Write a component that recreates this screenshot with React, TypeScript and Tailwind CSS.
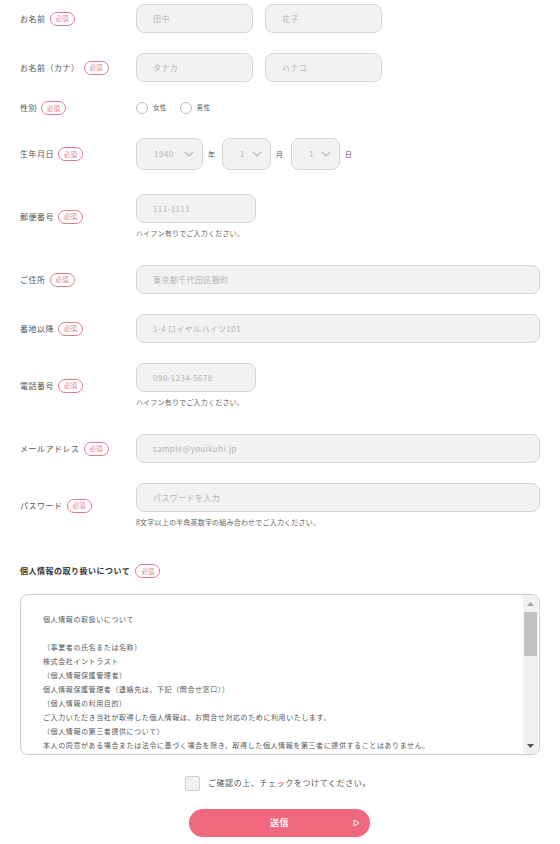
import React from "react";

const FONT = { fontFamily: '"Noto Sans CJK JP", "Noto Sans", sans-serif' };

function Badge() {
  return (
    <span className="inline-flex h-[14px] items-center rounded-full border-[1.5px] border-[#e27a8e] px-[5px] text-[6.5px] leading-none text-[#e27a8e]">
      必須
    </span>
  );
}

function Label({ text }: { text: string }) {
  return (
    <div className="flex w-[116px] shrink-0 items-center gap-[4px]">
      <span className="text-[8px] leading-[12px] tracking-[0.5px] text-[#555]">{text}</span>
      <Badge />
    </div>
  );
}

function Input({ ph, w }: { ph: string; w?: string }) {
  return (
    <div
      className={`flex h-[29px] items-center rounded-[8px] border border-[#d6d6d6] bg-[#f2f2f2] pl-[16px] text-[8px] tracking-[0.4px] text-[#b3b3b3] ${w ?? "flex-1"}`}
    >
      {ph}
    </div>
  );
}

function Hint({ text }: { text: string }) {
  return <div className="mt-[4px] text-[7px] leading-[12px] tracking-[0.2px] text-[#666]">{text}</div>;
}

function Select({ value, w, pl }: { value: string; w: string; pl: string }) {
  return (
    <div className={`flex h-[32px] items-center justify-between rounded-[8px] border border-[#d6d6d6] bg-[#f2f2f2] ${w} ${pl} pr-[8px]`}>
      <span className="text-[8px] tracking-[0.5px] text-[#b3b3b3]">{value}</span>
      <svg width="10" height="6" viewBox="0 0 10 6" fill="none">
        <path d="M1 1l4 4 4-4" stroke="#b8b8b8" strokeWidth="1.1" />
      </svg>
    </div>
  );
}

function Radio({ label }: { label: string }) {
  return (
    <div className="flex items-center gap-[5px]">
      <span className="h-[12px] w-[12px] rounded-full border border-[#bdbdbd] bg-white" />
      <span className="text-[6.5px] tracking-[0.3px] text-[#555]">{label}</span>
    </div>
  );
}

const policy = [
  "個人情報の取扱いについて",
  "",
  "（事業者の氏名または名称）",
  "株式会社イントラスト",
  "（個人情報保護管理者）",
  "個人情報保護管理者（連絡先は、下記（問合せ窓口））",
  "（個人情報の利用目的）",
  "ご入力いただき当社が取得した個人情報は、お問合せ対応のために利用いたします。",
  "（個人情報の第三者提供について）",
  "本人の同意がある場合または法令に基づく場合を除き、取得した個人情報を第三者に提供することはありません。",
];

export default function App() {
  return (
    <div style={FONT} className="w-[560px] bg-white px-[20px] pt-[4px] pb-[7px]">
      {/* お名前 */}
      <div className="flex items-center">
        <Label text="お名前" />
        <div className="flex gap-[12px]">
          <Input ph="田中" w="w-[117px]" />
          <Input ph="花子" w="w-[117px]" />
        </div>
      </div>
      {/* カナ */}
      <div className="mt-[20px] flex items-center">
        <Label text="お名前（カナ）" />
        <div className="flex gap-[12px]">
          <Input ph="タナカ" w="w-[117px]" />
          <Input ph="ハナコ" w="w-[117px]" />
        </div>
      </div>
      {/* 性別 */}
      <div className="mt-[20px] flex h-[12px] items-center">
        <Label text="性別" />
        <div className="flex items-center gap-[13px]">
          <Radio label="女性" />
          <Radio label="男性" />
        </div>
      </div>
      {/* 生年月日 */}
      <div className="mt-[24px] flex items-center">
        <Label text="生年月日" />
        <div className="flex items-center">
          <Select value="1940" w="w-[67px]" pl="pl-[17px]" />
          <span className="ml-[5px] mr-[7px] text-[7px] text-[#555]">年</span>
          <Select value="1" w="w-[49px]" pl="pl-[17px]" />
          <span className="ml-[5px] mr-[8px] text-[7px] text-[#555]">月</span>
          <Select value="1" w="w-[49px]" pl="pl-[17px]" />
          <span className="ml-[5px] text-[7px] text-[#555]">日</span>
        </div>
      </div>
      {/* 郵便番号 */}
      <div className="mt-[24px] flex items-center">
        <Label text="郵便番号" />
        <div>
          <Input ph="111-1111" w="w-[120px]" />
          <Hint text="ハイフン有りでご入力ください。" />
        </div>
      </div>
      {/* ご住所 */}
      <div className="mt-[26px] flex items-center">
        <Label text="ご住所" />
        <Input ph="東京都千代田区麹町" />
      </div>
      {/* 番地以降 */}
      <div className="mt-[20px] flex items-center">
        <Label text="番地以降" />
        <Input ph="1-4 ロイヤルハイツ101" />
      </div>
      {/* 電話番号 */}
      <div className="mt-[20px] flex items-center">
        <Label text="電話番号" />
        <div>
          <Input ph="090-1234-5678" w="w-[120px]" />
          <Hint text="ハイフン有りでご入力ください。" />
        </div>
      </div>
      {/* メール */}
      <div className="mt-[26px] flex items-center">
        <Label text="メールアドレス" />
        <Input ph="sample@youikuhi.jp" />
      </div>
      {/* パスワード */}
      <div className="mt-[20px] flex items-center">
        <Label text="パスワード" />
        <div className="flex-1">
          <Input ph="パスワードを入力" w="w-full" />
          <Hint text="8文字以上の半角英数字の組み合わせでご入力ください。" />
        </div>
      </div>
      {/* 個人情報 */}
      <div className="mt-[36px] flex h-[14px] items-center gap-[5px]">
        <span className="text-[8px] font-bold tracking-[0.5px] text-[#333]">個人情報の取り扱いについて</span>
        <Badge />
      </div>
      <div className="mt-[16px] flex h-[161px] overflow-hidden rounded-[8px] border border-[#cfcfcf] bg-white">
        <div className="flex-1 pl-[22px] pt-[17px]">
          {policy.map((l, i) => (
            <div key={i} className="h-[14px] whitespace-nowrap text-[7px] leading-[14px] tracking-[0.6px] text-[#555]">
              {l}
            </div>
          ))}
        </div>
        <div className="mr-[1px] flex w-[15px] flex-col bg-[#f1f1f1]">
          <div className="flex h-[17px] items-center justify-center">
            <svg width="7" height="4" viewBox="0 0 7 4">
              <path d="M0 4L3.5 0L7 4z" fill="#a3a3a3" />
            </svg>
          </div>
          <div className="mx-[1px] h-[44px] bg-[#c1c1c1]" />
          <div className="flex-1" />
          <div className="flex h-[17px] items-center justify-center">
            <svg width="7" height="4" viewBox="0 0 7 4">
              <path d="M0 0L3.5 4L7 0z" fill="#505050" />
            </svg>
          </div>
        </div>
      </div>
      {/* checkbox */}
      <div className="mt-[20px] flex h-[16px] items-center justify-center gap-[8px] pr-[4px]">
        <span className="h-[15px] w-[15px] rounded-[2px] border border-[#cfcfcf] bg-[#f2f2f2]" />
        <span className="text-[8px] tracking-[0.6px] text-[#555]">ご確認の上、チェックをつけてください。</span>
      </div>
      {/* button */}
      <div className="mt-[18px] flex justify-center pr-[1px]">
        <div className="relative flex h-[28px] w-[181px] items-center justify-center rounded-full bg-[#f0687e] text-[9px] font-bold tracking-[0.5px] text-white">
          送信
          <svg className="absolute right-[10px] top-[10px]" width="7" height="8" viewBox="0 0 7 8" fill="none">
            <path d="M1 1l5 3-5 3z" stroke="white" strokeWidth="1" strokeLinejoin="round" />
          </svg>
        </div>
      </div>
    </div>
  );
}
